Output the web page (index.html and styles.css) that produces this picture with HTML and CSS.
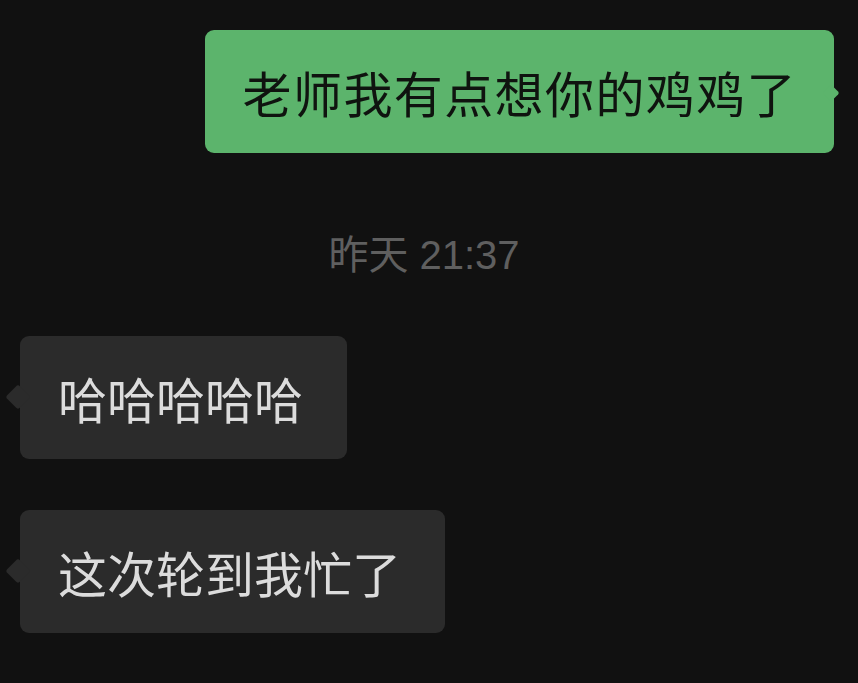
FILE: index.html
```html
<!DOCTYPE html>
<html lang="zh">
<head>
<meta charset="utf-8">
<link rel="stylesheet" href="styles.css">
</head>
<body>
<div class="chat">
  <div class="row out">
    <div class="bubble green">老师我有点想你的鸡鸡了</div>
  </div>
  <div class="time">昨天 21:37</div>
  <div class="row in first">
    <div class="bubble dark">哈哈哈哈哈</div>
  </div>
  <div class="row in second">
    <div class="bubble dark">这次轮到我忙了</div>
  </div>
</div>
</body>
</html>
```

FILE: styles.css
```css
html, body {
  margin: 0;
  padding: 0;
  background: #111111;
}
body {
  width: 858px;
  height: 683px;
  overflow: hidden;
  font-family: "Noto Sans CJK SC", "Noto Sans", sans-serif;
}
.chat {
  display: flex;
  flex-direction: column;
  padding: 30px 24px 0 20px;
}
.row {
  display: flex;
}
.out {
  justify-content: flex-end;
}
.bubble {
  position: relative;
  font-size: 49px;
  line-height: 59px;
  padding: 32px 38px;
  border-radius: 9px;
}
.green {
  background: #5cb46c;
  color: #0f130f;
  letter-spacing: 1.4px;
  padding-left: 38px;
  padding-right: 37px;
}
.green::after {
  content: "";
  position: absolute;
  right: -3px;
  top: 57px;
  width: 12px;
  height: 12px;
  background: #5cb46c;
  transform: rotate(45deg);
  border-radius: 2px;
}
.dark {
  background: #2b2b2b;
  color: #dcdcdc;
  padding-right: 44px;
}
.dark::before {
  content: "";
  position: absolute;
  left: -11px;
  top: 52px;
  width: 18px;
  height: 18px;
  background: #2b2b2b;
  transform: rotate(45deg);
  border-radius: 3px;
}
.time {
  align-self: center;
  margin: 80px 0 0 -6px;
  font-size: 40px;
  line-height: 44px;
  color: #5f5f5f;
  font-family: "Liberation Sans", "Noto Sans CJK SC", sans-serif;
}
.in.first {
  margin-top: 59px;
}
.in.second {
  margin-top: 51px;
}
```
